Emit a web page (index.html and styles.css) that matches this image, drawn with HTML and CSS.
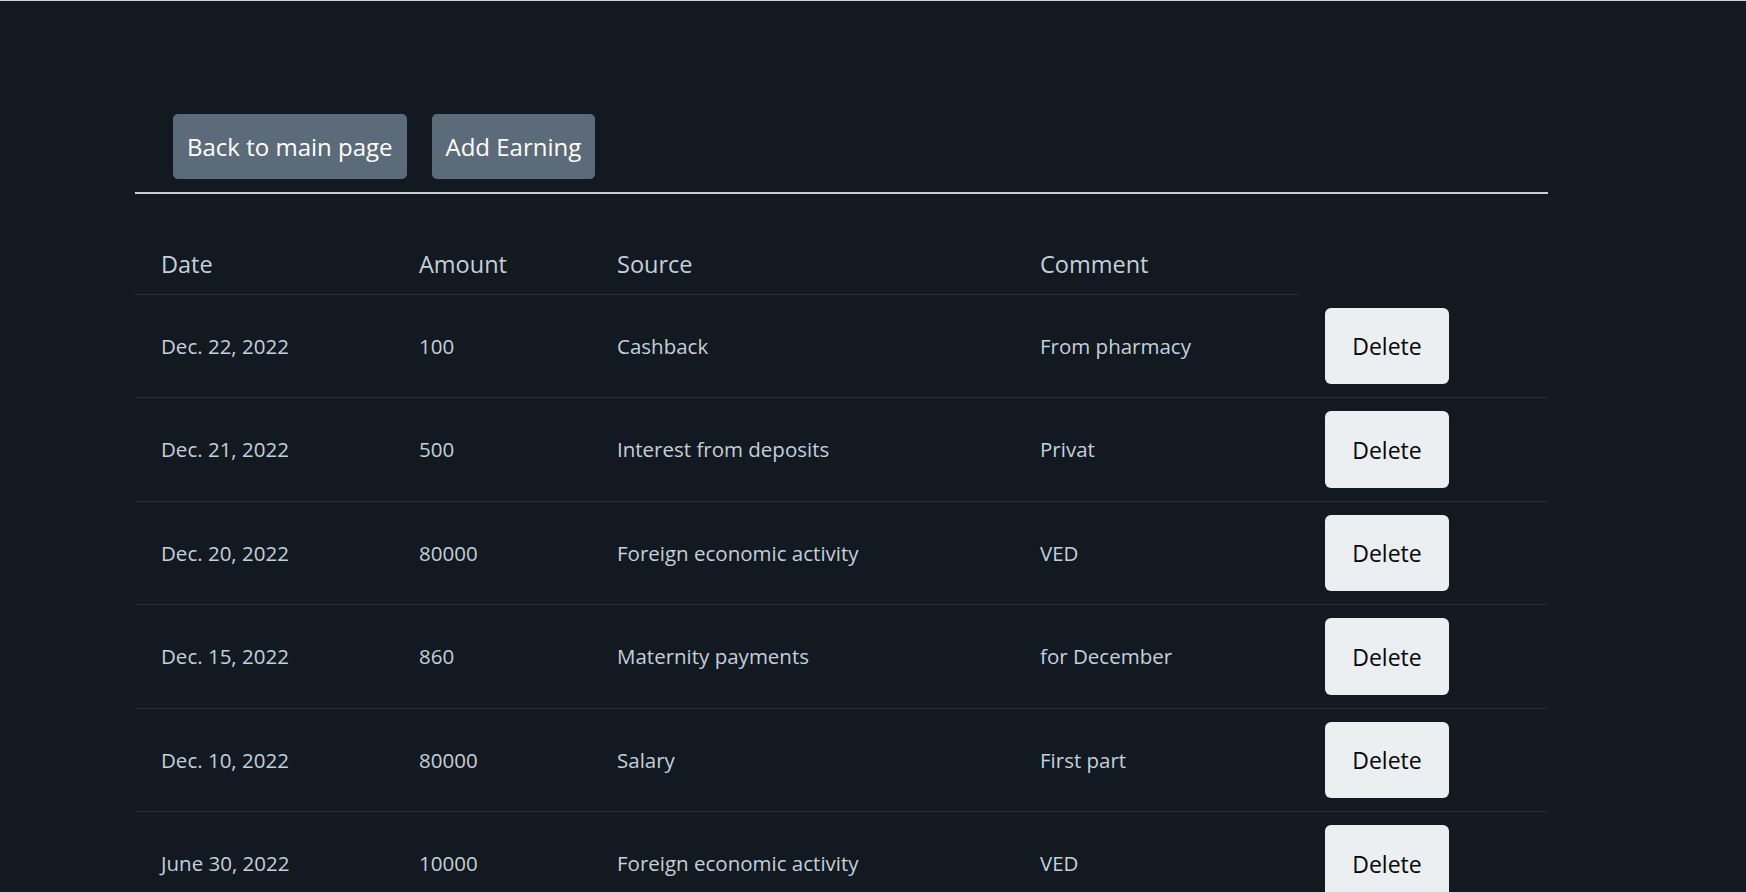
FILE: index.html
```html
<!DOCTYPE html>
<html lang="en">
<head>
<meta charset="utf-8">
<title>Earnings</title>
<link rel="stylesheet" href="styles.css">
</head>
<body>
<div class="frame">
  <div class="container">
    <nav class="actions">
      <a class="btn btn-secondary" href="#">Back to main page</a>
      <a class="btn btn-secondary" href="#">Add Earning</a>
    </nav>
    <hr class="divider">
    <table class="earnings">
      <colgroup>
        <col class="c-date">
        <col class="c-amount">
        <col class="c-source">
        <col class="c-comment">
        <col class="c-action">
      </colgroup>
      <thead>
        <tr>
          <th>Date</th>
          <th>Amount</th>
          <th>Source</th>
          <th>Comment</th>
        </tr>
      </thead>
      <tbody>
        <tr>
          <td>Dec. 22, 2022</td>
          <td>100</td>
          <td>Cashback</td>
          <td>From pharmacy</td>
          <td class="action"><button class="btn-delete">Delete</button></td>
        </tr>
        <tr>
          <td>Dec. 21, 2022</td>
          <td>500</td>
          <td>Interest from deposits</td>
          <td>Privat</td>
          <td class="action"><button class="btn-delete">Delete</button></td>
        </tr>
        <tr>
          <td>Dec. 20, 2022</td>
          <td>80000</td>
          <td>Foreign economic activity</td>
          <td>VED</td>
          <td class="action"><button class="btn-delete">Delete</button></td>
        </tr>
        <tr>
          <td>Dec. 15, 2022</td>
          <td>860</td>
          <td>Maternity payments</td>
          <td>for December</td>
          <td class="action"><button class="btn-delete">Delete</button></td>
        </tr>
        <tr>
          <td>Dec. 10, 2022</td>
          <td>80000</td>
          <td>Salary</td>
          <td>First part</td>
          <td class="action"><button class="btn-delete">Delete</button></td>
        </tr>
        <tr>
          <td>June 30, 2022</td>
          <td>10000</td>
          <td>Foreign economic activity</td>
          <td>VED</td>
          <td class="action"><button class="btn-delete">Delete</button></td>
        </tr>
      </tbody>
    </table>
  </div>
</div>
</body>
</html>
```

FILE: styles.css
```css
html, body {
  margin: 0;
  padding: 0;
  background: #121920;
}

body {
  font-family: "Open Sans", "Noto Sans", "Liberation Sans", sans-serif;
  color: #c4d0da;
}

.frame {
  box-sizing: border-box;
  height: 100vh;
  overflow: hidden;
  border-top: 1px solid #cfd3d7;
  border-bottom: 1px solid #cfd3d7;
}

.container {
  margin-left: 135px;
  width: 1413px;
}

.actions {
  display: flex;
  gap: 25px;
  padding: 113px 0 0 38px;
}

.btn {
  box-sizing: border-box;
  display: inline-flex;
  align-items: center;
  justify-content: center;
  height: 65px;
  padding: 0 14px;
  border-radius: 5px;
  font-size: 24px;
  text-decoration: none;
  white-space: nowrap;
}

.btn-secondary {
  background: #5b6b79;
  color: #ffffff;
}

.divider {
  margin: 13px 0 0 0;
  border: 0;
  height: 2px;
  background: #c9ced4;
}

.earnings {
  margin-top: 40px;
  width: 1413px;
  table-layout: fixed;
  border-collapse: collapse;
}

.c-date { width: 258px; }
.c-amount { width: 198px; }
.c-source { width: 423px; }
.c-comment { width: 286px; }
.c-action { width: 248px; }

.earnings th {
  text-align: left;
  font-weight: 400;
  font-size: 23.5px;
  line-height: 1.5;
  padding: 12.5px 26px;
  border-bottom: 1px solid #262e36;
}

.earnings td {
  font-size: 20.5px;
  line-height: 1.5;
  padding: 13px 26px;
  vertical-align: middle;
  border-bottom: 1px solid #262e36;
  white-space: nowrap;
}

.earnings td.action {
  padding-left: 25px;
  padding-right: 0;
}

.btn-delete {
  display: block;
  box-sizing: border-box;
  width: 124px;
  height: 76.5px;
  border: 0;
  border-radius: 6px;
  background: #eceff2;
  color: #050505;
  font-family: "Open Sans", "Noto Sans", "Liberation Sans", sans-serif;
  font-size: 23px;
  padding: 0;
}
```
